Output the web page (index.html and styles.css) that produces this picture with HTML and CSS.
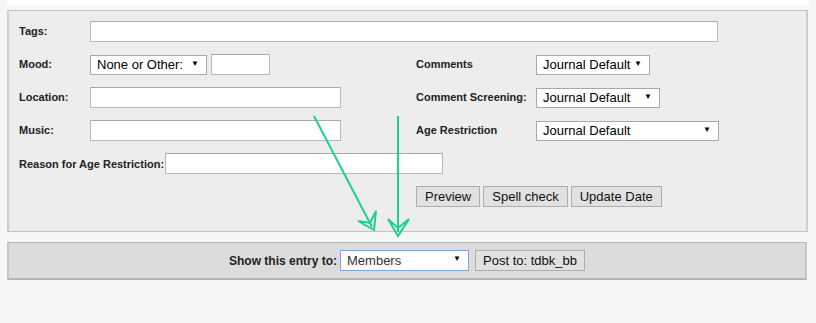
FILE: index.html
```html
<!DOCTYPE html>
<html lang="en">
<head>
  <meta charset="UTF-8" />
  <title>Post entry options</title>
  <link rel="stylesheet" href="styles.css">
</head>
<body>
  <div class="page">
    <div class="top-strip"></div>

    <form class="options-panel">
      <label class="opt-label" for="prop_tags">Tags:</label>
      <input class="text-input tags-input" type="text" id="prop_tags">

      <label class="opt-label">Mood:</label>
      <div class="mood-cell">
        <span class="select-wrap mood-select">
          <select><option>None or Other:</option></select>
        </span>
        <input class="text-input mood-other" type="text">
      </div>
      <label class="opt-label">Comments</label>
      <span class="select-wrap comments-select">
        <select><option>Journal Default</option></select>
      </span>

      <label class="opt-label">Location:</label>
      <input class="text-input wide-input" type="text">
      <label class="opt-label">Comment Screening:</label>
      <span class="select-wrap screening-select">
        <select><option>Journal Default</option></select>
      </span>

      <label class="opt-label">Music:</label>
      <input class="text-input wide-input" type="text">
      <label class="opt-label">Age Restriction</label>
      <span class="select-wrap age-select">
        <select><option>Journal Default</option></select>
      </span>

      <div class="reason-row">
        <label class="opt-label">Reason for Age Restriction:</label>
        <input class="text-input reason-input" type="text">
      </div>

      <div class="button-row">
        <button type="button" class="btn">Preview</button>
        <button type="button" class="btn">Spell check</button>
        <button type="button" class="btn">Update Date</button>
      </div>
    </form>

    <div class="submit-bar">
      <label class="submit-label">Show this entry to:</label>
      <span class="select-wrap security-select">
        <select><option>Members</option></select>
      </span>
      <button type="button" class="btn">Post to: tdbk_bb</button>
    </div>
  </div>

  <!-- annotation arrows drawn over the form -->
  <svg class="arrows" width="816" height="323" viewBox="0 0 816 323">
    <g fill="none" stroke="#1ecf98" stroke-width="2" stroke-linejoin="miter">
      <line x1="314" y1="116" x2="372" y2="227" />
      <path d="M358 221 L374 230 L376 211 L370 223 Z" />
      <line x1="398" y1="116" x2="398" y2="232" />
      <path d="M388 219 L398 236 L409 219 L398 228 Z" />
    </g>
  </svg>
</body>
</html>
```

FILE: styles.css
```css
body {
  margin: 0;
  background-color: #f6f6f6;
  font-family: 'Liberation Sans', Arial, sans-serif;
  color: #222;
}

*, *::before, *::after {
  box-sizing: border-box;
}

.page {
  padding: 0 7px;
  width: 816px;
}

.top-strip {
  height: 6px;
  width: 802px;
  background-color: #ffffff;
}

.options-panel {
  margin: 4px 0 0;
  width: 801px;
  height: 222px;
  background-color: #ededed;
  border: 1px solid #c2c2c2;
  border-left: 2px solid #cdcdcd;
  border-right: 2px solid #cdcdcd;
  padding: 10px 0 0 10px;
  display: grid;
  grid-template-columns: 71px 326px 120px 1fr;
  grid-auto-rows: 21px;
  row-gap: 12px;
  align-items: center;
}

.opt-label {
  font-size: 11px;
  font-weight: bold;
  color: #222;
  white-space: nowrap;
  margin-top: -2px;
}

.text-input {
  height: 21px;
  border: 1px solid #b9b9b9;
  border-top-color: #a9a9a9;
  background: #fff;
  font-family: inherit;
  font-size: 13px;
  padding: 0 4px;
  margin: 0;
}

.tags-input {
  grid-column: 2 / 5;
  width: 628px;
}

.wide-input {
  width: 251px;
}

.mood-cell {
  display: flex;
  gap: 4px;
  align-items: center;
}

.mood-other {
  width: 59px;
}

.select-wrap {
  position: relative;
  display: inline-block;
  height: 20px;
}

.select-wrap select {
  appearance: none;
  -webkit-appearance: none;
  width: 100%;
  height: 100%;
  margin: 0;
  border: 1px solid #a9a9a9;
  border-radius: 0;
  background: #fff;
  font-family: inherit;
  font-size: 13px;
  color: #000;
  padding: 0 0 0 6px;
}

.select-wrap::after {
  content: "\25BC";
  position: absolute;
  right: 8px;
  top: 5px;
  font-size: 8px;
  line-height: 1;
  color: #000;
  pointer-events: none;
}

.mood-select { width: 117px; }
.comments-select { width: 114px; }
.screening-select { width: 124px; }
.age-select { width: 183px; }

.reason-row {
  grid-column: 1 / 3;
  display: flex;
  align-items: center;
}

.reason-row .opt-label {
  margin-top: 0;
}

.reason-input {
  flex: none;
  width: 278px;
  margin-left: 1px;
}

.button-row {
  grid-row: 6;
  grid-column: 3 / 5;
  display: flex;
  gap: 3px;
  height: 21px;
}

.btn {
  height: 21px;
  padding: 0 7px;
  background-color: #e1e1e1;
  border: 1px solid #adadad;
  border-radius: 0;
  font-family: inherit;
  font-size: 13px;
  color: #111;
  margin: 0;
}

.button-row .btn {
  padding: 0 8px;
}

.submit-bar {
  margin-top: 10px;
  width: 800px;
  height: 38px;
  background-color: #dcdcdc;
  border: 1px solid #b4b4b4;
  border-left: 2px solid #c6c6c6;
  border-right: 2px solid #c6c6c6;
  border-bottom: 2px solid #b4b4b4;
  display: flex;
  justify-content: center;
  align-items: center;
  gap: 3px;
}

.submit-label {
  font-size: 12px;
  font-weight: bold;
  color: #222;
}

.security-select {
  width: 129px;
  height: 21px;
  margin-right: 3px;
}

.security-select select {
  border-color: #7ea6dc;
  color: #333;
}

.arrows {
  position: absolute;
  left: 0;
  top: 0;
  pointer-events: none;
}
```
